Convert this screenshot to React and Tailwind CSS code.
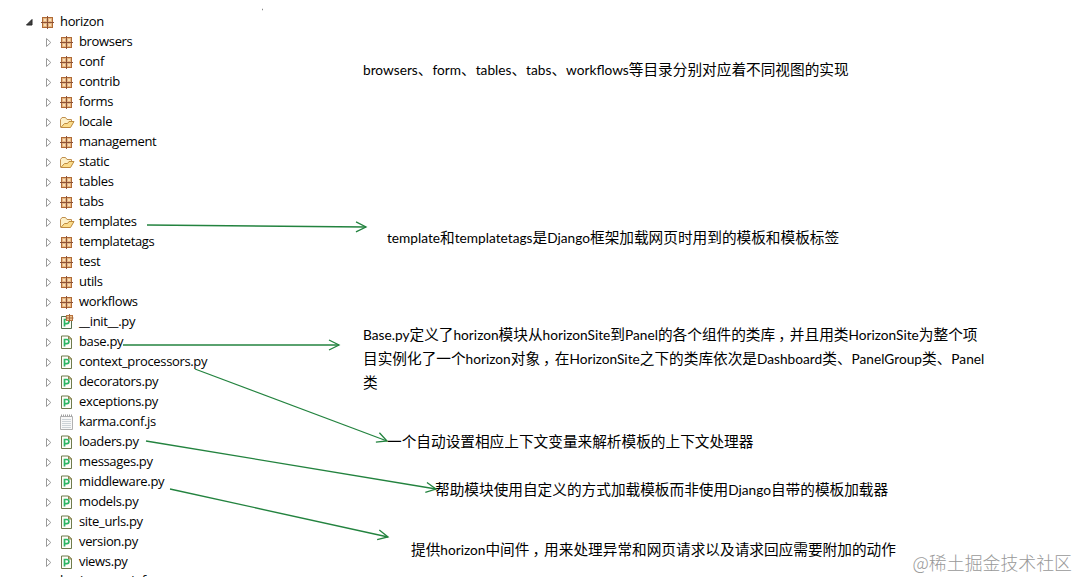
import React from 'react';

const tree = [
  { name: 'browsers', type: 'package' },
  { name: 'conf', type: 'package' },
  { name: 'contrib', type: 'package' },
  { name: 'forms', type: 'package' },
  { name: 'locale', type: 'folder' },
  { name: 'management', type: 'package' },
  { name: 'static', type: 'folder' },
  { name: 'tables', type: 'package' },
  { name: 'tabs', type: 'package' },
  { name: 'templates', type: 'folder' },
  { name: 'templatetags', type: 'package' },
  { name: 'test', type: 'package' },
  { name: 'utils', type: 'package' },
  { name: 'workflows', type: 'package' },
  { name: '__init__.py', type: 'init' },
  { name: 'base.py', type: 'python' },
  { name: 'context_processors.py', type: 'python' },
  { name: 'decorators.py', type: 'python' },
  { name: 'exceptions.py', type: 'python' },
  { name: 'karma.conf.js', type: 'file' },
  { name: 'loaders.py', type: 'python' },
  { name: 'messages.py', type: 'python' },
  { name: 'middleware.py', type: 'python' },
  { name: 'models.py', type: 'python' },
  { name: 'site_urls.py', type: 'python' },
  { name: 'version.py', type: 'python' },
  { name: 'views.py', type: 'python' },
];

const arrows = [
  [147, 225, 366, 227],
  [123, 345, 339, 345],
  [195, 369, 387, 441],
  [146, 441, 436, 489],
  [170, 489, 388, 537],
];

const icons = {
  package: (
    <>
      <rect x="2.5" y="3.5" width="10" height="10" fill="#e6b682" stroke="#b06a35" />
      <path d="M4 6h2M4 11h2M9 6h2M9 11h2" stroke="#f8dfba" strokeWidth="2" />
      <path d="M7.5 2v13M1 8.5h13" stroke="#8c5238" />
    </>
  ),
  folder: (
    <>
      <path d="M1.500 13V5.500L3 3.500h3.500L8 5.500h4.500V8" fill="#fdf0c8" stroke="#c08f4e" />
      <path d="M1.800 13.500 5.500 9.500h3L10 7.500h5L11.500 13.500z" fill="#fbdc8c" stroke="#bd8a3e" />
    </>
  ),
  python: (
    <>
      <path d="M2.500 2h7l3 3v9.500h-10z" fill="#fdfdf8" stroke="#6f7b4c" />
      <path d="M9.500 2v3h3z" fill="#d9cf96" stroke="#8a8350" />
      <path d="M5.500 12.500V5.500h2.300a1.900 1.900 0 0 1 0 4.200H5.500" fill="none" stroke="#2bb563" strokeWidth="1.700" />
    </>
  ),
  init: (
    <>
      <path d="M2.500 2.500h10v12h-10z" fill="#fdfdf8" stroke="#55704c" />
      <path d="M5.500 12.500V5.500h2.300a1.900 1.900 0 0 1 0 4.200H5.500" fill="none" stroke="#2bb563" strokeWidth="1.700" />
      <rect x="7.500" y="1.500" width="6" height="5" fill="#eec592" stroke="#b87340" />
      <path d="M10.500 0v8M6.500 4h8" stroke="#a5683f" />
    </>
  ),
  file: (
    <>
      <path d="M1.500 2.500h12v13h-12z" fill="#f8f8f8" stroke="#b0b0b0" />
      <path d="M3 5.500h9M3 7.500h9M3 9.500h9M3 11.500h9M3 13.500h9" stroke="#cdd3d7" />
      <path d="M2 1.500h12" stroke="#a0a0a0" strokeWidth="2" strokeDasharray="1 1" />
    </>
  ),
};

const Icon = ({ type }) => (
  <svg viewBox="0 0 16 16" className="mr-1 size-4 shrink-0">
    {icons[type]}
  </svg>
);

const TreeRow = ({ name, type }) => (
  <li className="flex h-5 items-center pl-[44px]">
    <svg viewBox="0 0 8 10" className="mr-[7px] h-[10px] w-2 shrink-0">
      {type !== 'file' && <path d="M2.500 1.500v8l4.300-4z" fill="#fff" stroke="#9a9a9a" />}
    </svg>
    <Icon type={type} />
    <span className="mb-0.5">{name}</span>
  </li>
);

// Latin runs are set smaller than the Chinese text, the comma sits nearer mid-cell
const Note = ({ className = '', children }) => (
  <p className={`h-6 whitespace-nowrap text-[14.67px] leading-6 ${className}`}>
    {children.split(/([A-Za-z.]+|，)/).map((part, i) => {
      if (part === '，') {
        return <span key={i} className="relative left-[3px]">{part}</span>;
      }
      return i % 2 ? (
        <span key={i} className="font-['Lato'] text-[13.7px] leading-none">{part}</span>
      ) : (
        part
      );
    })}
  </p>
);

const Arrow = ({ points: [x1, y1, x2, y2] }) => {
  const angle = (Math.atan2(y2 - y1, x2 - x1) * 180) / Math.PI;
  return (
    <g>
      <path d={`M${x1} ${y1}L${x2} ${y2}`} />
      <path d="M-10-5 0 0-10 5" transform={`translate(${x2} ${y2}) rotate(${angle})`} />
    </g>
  );
};

const App = () => {
  return (
    <div className="relative flex h-[580px] w-[1079px] overflow-hidden bg-white text-black">
      <div className="h-[577px] w-[363px] shrink-0 overflow-hidden pt-3 font-['Open_Sans'] text-[13px] leading-5 tracking-[-0.34px]">
        <div className="flex h-5 items-center pl-[25px]">
          <svg viewBox="0 0 8 8" className="mr-[7px] size-2">
            <path d="M7 1.500V7H1.500z" fill="#404040" stroke="#262626" />
          </svg>
          <Icon type="package" />
          <span className="mb-0.5">horizon</span>
        </div>
        <ul>
          {tree.map((item) => (
            <TreeRow key={item.name} {...item} />
          ))}
        </ul>
        <div className="-mt-0.5 h-5 pl-[60px]">horizon.egg-info</div>
      </div>

      <div className="pt-[57px] font-['Noto_Sans_CJK_SC',sans-serif]">
        <Note>browsers、form、tables、tabs、workflows等目录分别对应着不同视图的实现</Note>
        <Note className="mt-36 pl-6">template和templatetags是Django框架加载网页时用到的模板和模板标签</Note>
        <Note className="mt-[73px]">Base.py定义了horizon模块从horizonSite到Panel的各个组件的类库，并且用类HorizonSite为整个项</Note>
        <Note>目实例化了一个horizon对象，在HorizonSite之下的类库依次是Dashboard类、PanelGroup类、Panel</Note>
        <Note>类</Note>
        <Note className="mt-[35px] pl-6">一个自动设置相应上下文变量来解析模板的上下文处理器</Note>
        <Note className="mt-6 pl-[72px]">帮助模块使用自定义的方式加载模板而非使用Django自带的模板加载器</Note>
        <Note className="mt-9 pl-12">提供horizon中间件，用来处理异常和网页请求以及请求回应需要附加的动作</Note>
      </div>

      <svg className="pointer-events-none absolute inset-0 h-full w-full" fill="none" stroke="#23833f" strokeWidth="1.3">
        {arrows.map((points) => (
          <Arrow key={points.join()} points={points} />
        ))}
        <path d="M262 9.500h1" stroke="#888" />
      </svg>

      <div className="absolute right-[7px] bottom-[6px] font-['Noto_Sans_CJK_SC',sans-serif] text-[17.900px] leading-6 font-light whitespace-nowrap text-[#999]">
        @稀土掘金技术社区
      </div>
    </div>
  );
};

export default App;
